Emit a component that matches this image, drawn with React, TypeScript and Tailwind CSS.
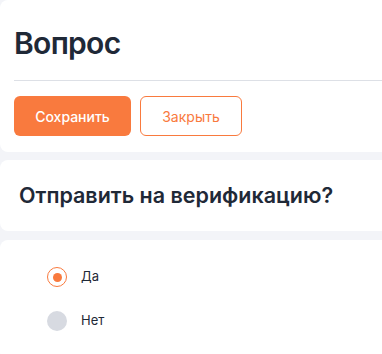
import React, { useState } from "react";

export default function App() {
  const [answer, setAnswer] = useState("yes");

  return (
    <div
      className="h-[354px] bg-[#f3f4f8] overflow-hidden"
      style={{ fontFamily: "Inter, 'Noto Sans', sans-serif" }}
    >
      {/* Header card */}
      <div className="bg-white rounded-l-lg -mr-4 pl-[14px] pt-[26px] pb-[16px] h-[152px]">
        <h1 className="text-[30px] leading-[34px] font-semibold text-[#1f2937] tracking-[-0.7px]">
          Вопрос
        </h1>
        <div className="mt-[20px] border-t border-[#dde0e6]" />
        <div className="flex gap-[9px] mt-[15px]">
          <button className="h-[40px] w-[117px] rounded-md bg-[#f97a3e] text-white text-[14px] font-medium">
            Сохранить
          </button>
          <button className="h-[40px] w-[102px] rounded-md border border-[#f97a3e] bg-white text-[#f97a3e] text-[14px]">
            Закрыть
          </button>
        </div>
      </div>

      {/* Question card */}
      <div className="bg-white rounded-l-lg -mr-4 mt-[8px] h-[71px] flex items-center pl-[19px]">
        <h2 className="text-[21.5px] font-semibold text-[#1f2937]">
          Отправить на верификацию?
        </h2>
      </div>

      {/* Options card */}
      <div className="bg-white rounded-l-lg -mr-4 mt-[9px] pt-[27px] pl-[47px] h-[120px]">
        <div className="flex flex-col gap-[24px]">
          {[
            { id: "yes", label: "Да" },
            { id: "no", label: "Нет" },
          ].map((o) => (
            <label
              key={o.id}
              className="flex items-center gap-[14px] cursor-pointer"
              onClick={() => setAnswer(o.id)}
            >
              {answer === o.id ? (
                <span className="w-[20px] h-[20px] rounded-full border border-[#f97a3e] flex items-center justify-center">
                  <span className="w-[9px] h-[9px] rounded-full bg-[#f97a3e]" />
                </span>
              ) : (
                <span className="w-[20px] h-[20px] rounded-full bg-[#d7dae1]" />
              )}
              <span className="text-[13px] text-[#1f2937]">{o.label}</span>
            </label>
          ))}
        </div>
      </div>
    </div>
  );
}
